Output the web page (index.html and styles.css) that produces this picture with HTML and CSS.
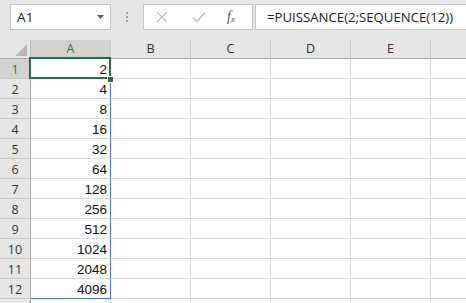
FILE: index.html
```html
<!DOCTYPE html>
<html>
<head>
<meta charset="utf-8">
<link rel="stylesheet" href="styles.css">
</head>
<body>
<div class="app">
  <div class="toolbar">
    <div class="namebox">
      <span class="name">A1</span>
      <svg class="caret" width="7" height="4" viewBox="0 0 7 4"><path d="M0 0H7L3.5 4Z" fill="#5a5a5a"/></svg>
    </div>
    <div class="grip"><i></i><i></i><i></i></div>
    <div class="fxbox">
      <svg class="ico" width="12" height="12" viewBox="0 0 12 12"><path d="M1 1L11 11M11 1L1 11" stroke="#c2c2c2" stroke-width="1.4" fill="none"/></svg>
      <svg class="ico" width="14" height="12" viewBox="0 0 14 12"><path d="M1 6.5L5 10.5L13 1.5" stroke="#c2c2c2" stroke-width="1.6" fill="none"/></svg>
      <span class="fx">f<sub>x</sub></span>
    </div>
    <div class="formula">=PUISSANCE(2;SEQUENCE(12))</div>
  </div>
  <div class="sheet">
    <div class="corner"><span class="tri"></span></div>
    <div class="ch sel">A</div>
    <div class="ch">B</div>
    <div class="ch">C</div>
    <div class="ch">D</div>
    <div class="ch">E</div>
    <div class="ch last"></div>

    <div class="rh sel">1</div><div class="c num spill">2</div><div class="c"></div><div class="c"></div><div class="c"></div><div class="c"></div><div class="c last"></div>
    <div class="rh">2</div><div class="c num spill">4</div><div class="c"></div><div class="c"></div><div class="c"></div><div class="c"></div><div class="c last"></div>
    <div class="rh">3</div><div class="c num spill">8</div><div class="c"></div><div class="c"></div><div class="c"></div><div class="c"></div><div class="c last"></div>
    <div class="rh">4</div><div class="c num spill">16</div><div class="c"></div><div class="c"></div><div class="c"></div><div class="c"></div><div class="c last"></div>
    <div class="rh">5</div><div class="c num spill">32</div><div class="c"></div><div class="c"></div><div class="c"></div><div class="c"></div><div class="c last"></div>
    <div class="rh">6</div><div class="c num spill">64</div><div class="c"></div><div class="c"></div><div class="c"></div><div class="c"></div><div class="c last"></div>
    <div class="rh">7</div><div class="c num spill">128</div><div class="c"></div><div class="c"></div><div class="c"></div><div class="c"></div><div class="c last"></div>
    <div class="rh">8</div><div class="c num spill">256</div><div class="c"></div><div class="c"></div><div class="c"></div><div class="c"></div><div class="c last"></div>
    <div class="rh">9</div><div class="c num spill">512</div><div class="c"></div><div class="c"></div><div class="c"></div><div class="c"></div><div class="c last"></div>
    <div class="rh">10</div><div class="c num spill">1024</div><div class="c"></div><div class="c"></div><div class="c"></div><div class="c"></div><div class="c last"></div>
    <div class="rh">11</div><div class="c num spill">2048</div><div class="c"></div><div class="c"></div><div class="c"></div><div class="c"></div><div class="c last"></div>
    <div class="rh">12</div><div class="c num spill end">4096</div><div class="c"></div><div class="c"></div><div class="c"></div><div class="c"></div><div class="c last"></div>
    <div class="rh"></div><div class="c"></div><div class="c"></div><div class="c"></div><div class="c"></div><div class="c"></div><div class="c last"></div>

    <div class="selection"></div>
    <div class="handle"></div>
  </div>
</div>
</body>
</html>
```
FILE: styles.css
```css
* { box-sizing: border-box; }
html, body { margin: 0; padding: 0; }
body {
  width: 466px;
  height: 303px;
  overflow: hidden;
  background: #fff;
  font-family: "Open Sans", "Liberation Sans", sans-serif;
}
.app { width: 466px; height: 303px; overflow: hidden; }

.toolbar {
  height: 40px;
  background: #e6e6e6;
  display: flex;
  align-items: flex-start;
  padding: 4px 0 0 10px;
}
.namebox {
  width: 101px;
  height: 26px;
  background: #fff;
  border: 1px solid #c6c6c6;
  display: flex;
  align-items: center;
  justify-content: space-between;
  padding: 0 6px 0 6px;
}
.name { font-size: 13.5px; color: #222; letter-spacing: 0.2px; }
.caret { margin-top: -1px; }
.grip {
  width: 32px;
  height: 26px;
  display: flex;
  flex-direction: column;
  align-items: center;
  justify-content: center;
  gap: 2px;
}
.grip i { display: block; width: 2px; height: 2px; background: #9a9a9a; }
.fxbox {
  width: 110px;
  height: 26px;
  background: #fff;
  border: 1px solid #c6c6c6;
  display: flex;
  align-items: center;
  padding-left: 12px;
  gap: 0;
}
.fxbox .ico:first-child { margin-right: 24px; }
.fxbox .ico:nth-child(2) { margin-right: 21px; }
.fx {
  font-family: "Liberation Serif", "DejaVu Serif", serif;
  font-style: italic;
  font-size: 14px;
  color: #555;
}
.fx sub { font-size: 9px; vertical-align: -1px; }
.formula {
  flex: 1;
  margin-left: 2px;
  margin-right: -2px;
  height: 26px;
  background: #fff;
  border: 1px solid #c6c6c6;
  font-size: 13.2px;
  line-height: 24px;
  color: #222;
  padding-left: 11px;
  white-space: nowrap;
}

.sheet {
  position: relative;
  display: grid;
  grid-template-columns: 31px 80px 80px 80px 80px 80px 40px;
  grid-template-rows: 19px repeat(12, 20px) 20px;
}
.corner {
  background: #e6e6e6;
  border-right: 1px solid #bdbdbd;
  border-bottom: 1px solid #ababab;
  position: relative;
}
.tri {
  position: absolute;
  right: 3px;
  bottom: 2px;
  width: 0;
  height: 0;
  border-left: 12px solid transparent;
  border-bottom: 12px solid #b7b7b7;
}
.ch {
  background: #e6e6e6;
  border-right: 1px solid #c8c8c8;
  border-bottom: 1px solid #ababab;
  font-size: 12.5px;
  color: #333;
  display: flex;
  align-items: center;
  justify-content: center;
  line-height: 1;
  padding-top: 1px;
}
.ch.sel { background: #d2d2d2; color: #217346; }
.rh {
  background: #e6e6e6;
  border-right: 1px solid #ababab;
  border-bottom: 1px solid #c8c8c8;
  font-size: 12.5px;
  color: #333;
  display: flex;
  align-items: flex-end;
  justify-content: center;
  padding-bottom: 2px;
  line-height: 1;
}
.rh.sel { background: #d2d2d2; color: #217346; }
.c {
  border-right: 1px solid #dadada;
  border-bottom: 1px solid #dadada;
}
.c.last, .ch.last { border-right: none; }
.num {
  font-family: "Liberation Sans", sans-serif;
  font-size: 13.5px;
  color: #111;
  text-align: right;
  padding-right: 3px;
  display: flex;
  align-items: flex-end;
  justify-content: flex-end;
  padding-bottom: 2px;
  line-height: 1;
}
.spill { border-right-color: #4a78cf; }
.spill.end { border-bottom-color: #4a78cf; }

.selection {
  position: absolute;
  left: 29px;
  top: 17px;
  width: 82px;
  height: 22px;
  border: 2px solid #217346;
}
.handle {
  position: absolute;
  left: 107px;
  top: 36px;
  width: 7px;
  height: 7px;
  background: #217346;
  border: 1px solid #fff;
}
```
